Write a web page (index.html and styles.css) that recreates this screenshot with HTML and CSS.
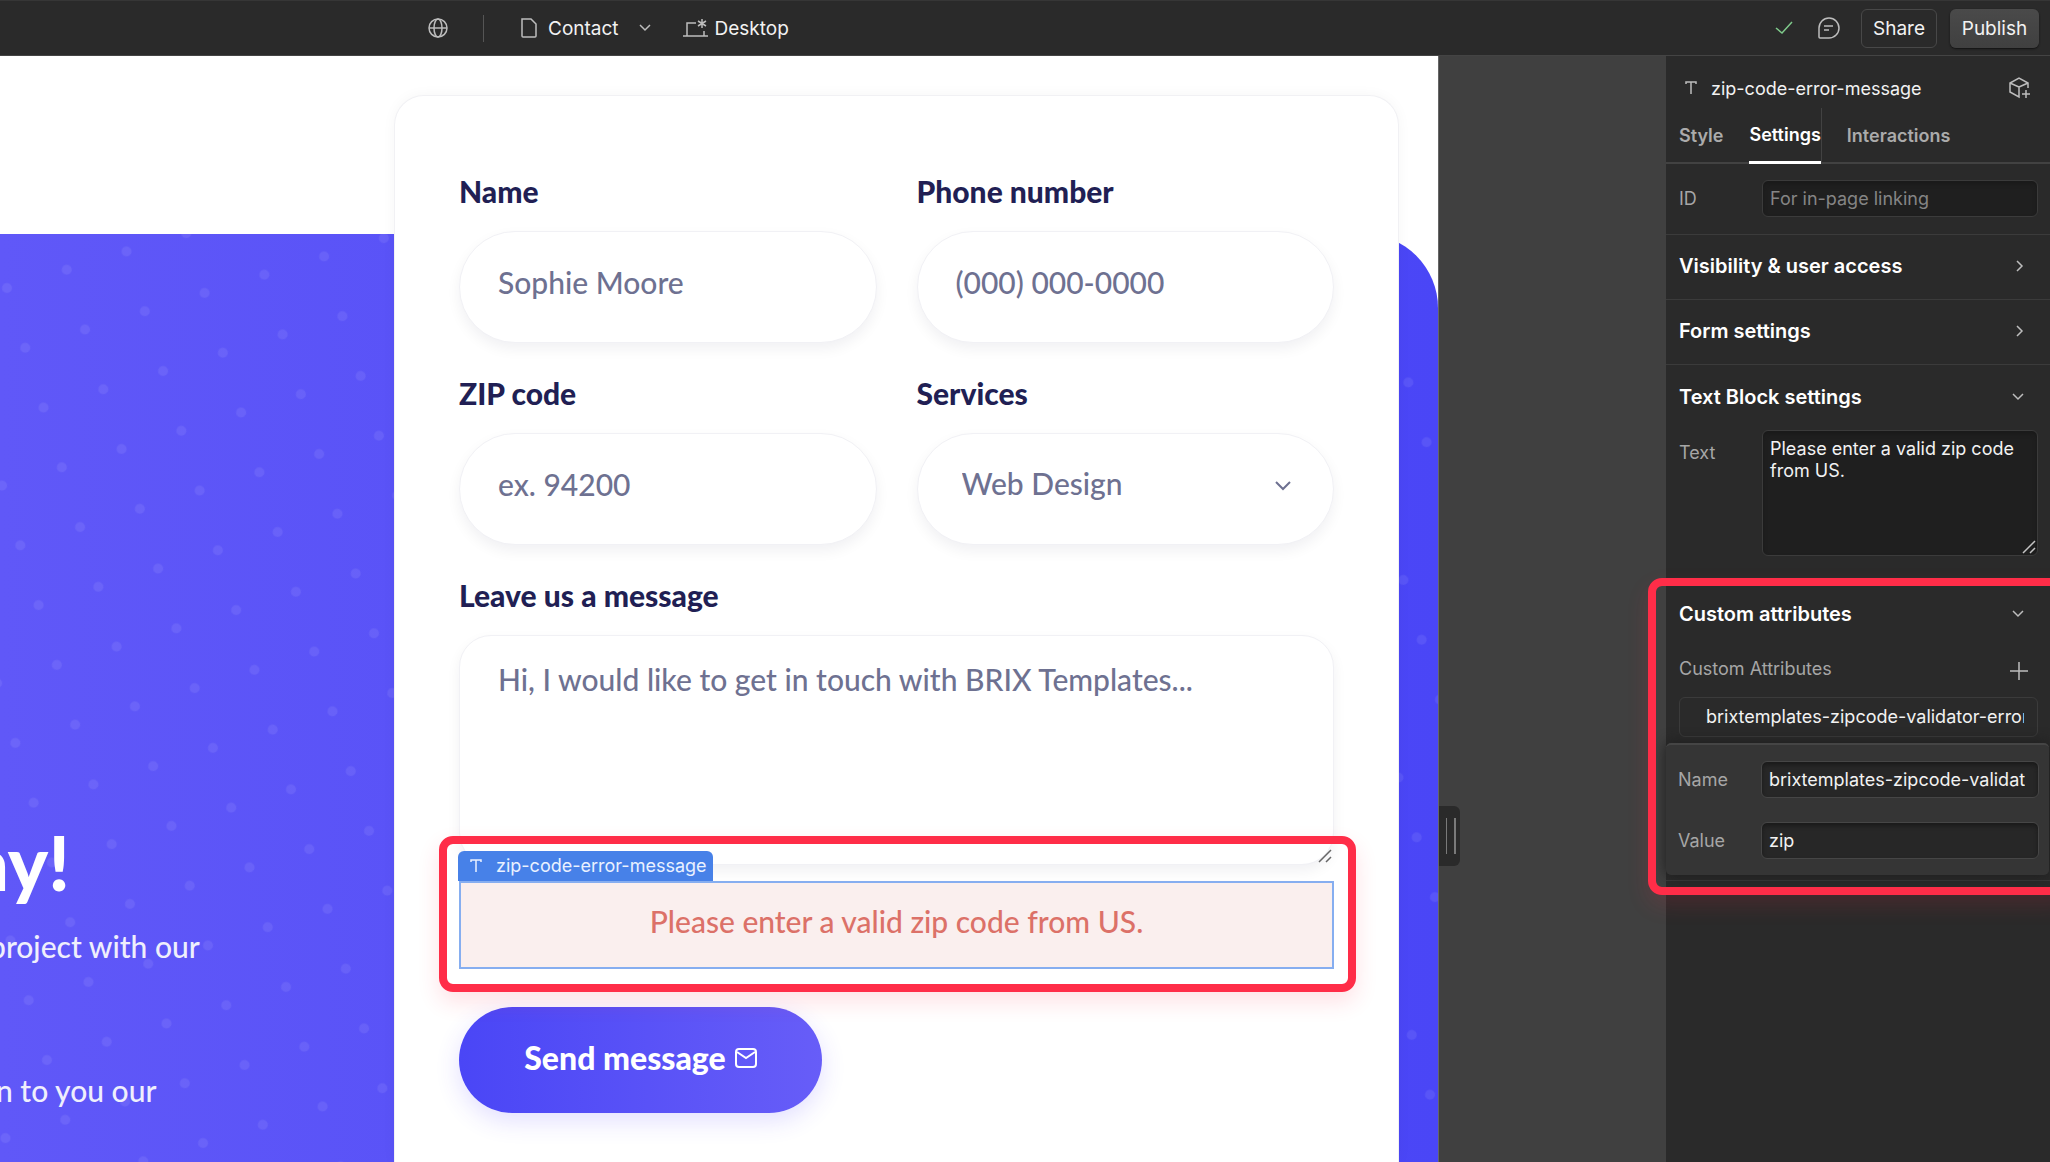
FILE: index.html
```html
<!DOCTYPE html>
<html lang="en">
<head>
  <meta charset="UTF-8">
  <meta name="viewport" content="width=device-width, initial-scale=1.0">
  <title>Contact - Designer</title>
  <link rel="stylesheet" href="styles.css">
</head>
<body>
  <header class="topbar">
    <div class="topbar-left">
      <button class="icon-btn globe-btn" aria-label="Localization">
        <svg width="20" height="20" viewBox="0 0 20 20"><circle cx="10" cy="10" r="9"/><ellipse cx="10" cy="10" rx="4" ry="9"/><path d="M1 10h18"/></svg>
      </button>
      <span class="divider"></span>
      <button class="page-btn">
        <svg width="18" height="20" viewBox="0 0 18 20"><path d="M2 1h9l5 5v12a1 1 0 0 1-1 1H3a1 1 0 0 1-1-1V1z"/></svg>
        <span>Contact</span>
        <svg class="page-arrow" width="12" height="8" viewBox="0 0 12 8"><path d="M1 1l5 5 5-5"/></svg>
      </button>
      <button class="page-btn device-btn">
        <svg width="26" height="20" viewBox="0 0 26 20"><path d="M0 18h25M4 18V5h9M21 18v-5M19 1v9M15 3l8 5M23 3l-8 5"/></svg>
        <span>Desktop</span>
      </button>
    </div>
    <div class="topbar-right">
      <svg class="check" width="18" height="14" viewBox="0 0 18 14"><path d="M1 7l6 5L17 1"/></svg>
      <button class="icon-btn" aria-label="Comments">
        <svg width="22" height="22" viewBox="0 0 22 22"><path d="M1 20V11a10 10 0 1 1 10 10H2a1 1 0 0 1-1-1zM6 9h9M6 13h5"/></svg>
      </button>
      <button class="share-btn">Share</button>
      <button class="publish-btn">Publish</button>
    </div>
  </header>

  <div class="workspace">
    <main class="page">
      <div class="hero-bg">
        <svg width="100%" height="100%" aria-hidden="true">
          <defs>
            <pattern id="dots" width="62.5" height="62.5" patternUnits="userSpaceOnUse" patternTransform="translate(7 54) rotate(-17) translate(-31 -31)">
              <circle cx="31" cy="31" r="5" fill="#fff" fill-opacity="0.08"/>
            </pattern>
          </defs>
          <rect width="100%" height="100%" fill="url(#dots)"/>
        </svg>
      </div>
      <div class="hero-text">
        <h1>ay!</h1>
        <p class="lead">project with our</p>
        <p class="note">n to you our</p>
      </div>
      <form class="card">
        <div class="fields">
          <div class="field">
            <label for="name">Name</label>
            <input id="name" type="text" placeholder="Sophie Moore">
          </div>
          <div class="field">
            <label for="phone">Phone number</label>
            <input id="phone" type="tel" placeholder="(000) 000-0000">
          </div>
          <div class="field">
            <label for="zip">ZIP code</label>
            <input id="zip" type="text" placeholder="ex. 94200">
          </div>
          <div class="field">
            <label for="services">Services</label>
            <div class="select-wrap">
              <select id="services"><option>Web Design</option></select>
              <svg width="16" height="10" viewBox="0 0 16 10"><path d="M1 1l7 7 7-7"/></svg>
            </div>
          </div>
          <div class="field wide">
            <label for="message">Leave us a message</label>
            <div class="area-wrap">
              <textarea id="message" placeholder="Hi, I would like to get in touch with BRIX Templates..."></textarea>
              <svg class="grip" width="14" height="14" viewBox="0 0 14 14"><path d="M1 13L13 1M8 13l5-5"/></svg>
            </div>
          </div>
        </div>
        <div class="error-wrap">
          <div class="error-message">Please enter a valid zip code from US.</div>
          <span class="tag">
            <svg width="12" height="14" viewBox="0 0 12 14"><path d="M1 3V1h10v2M6 1v12"/></svg>
            zip-code-error-message
          </span>
          <div class="highlight"></div>
        </div>
        <button type="button" class="send-btn">
          Send message
          <svg width="22" height="20" viewBox="0 0 22 20"><rect x="1" y="1" width="20" height="18" rx="3"/><path d="M2 4l9 6 9-6"/></svg>
        </button>
      </form>
    </main>

    <div class="gutter">
      <div class="handle"></div>
    </div>

    <aside class="panel">
      <div class="panel-title">
        <svg width="12" height="14" viewBox="0 0 12 14"><path d="M1 3V1h10v2M6 1v12"/></svg>
        <span>zip-code-error-message</span>
        <button class="icon-btn" aria-label="Create component">
          <svg width="22" height="22" viewBox="0 0 22 22"><path d="M19 11V6l-9-5-9 5v9l9 5V10L1 6M10 10l9-4M17 13v8M13 17h8"/></svg>
        </button>
      </div>
      <nav class="tabs">
        <button>Style</button>
        <button class="active">Settings</button>
        <button>Interactions</button>
      </nav>
      <div class="row id-row">
        <label for="el-id">ID</label>
        <input id="el-id" type="text" placeholder="For in-page linking">
      </div>
      <button class="section-head">
        Visibility &amp; user access
        <svg width="8" height="12" viewBox="0 0 8 12"><path d="M1 1l5 5-5 5"/></svg>
      </button>
      <button class="section-head">
        Form settings
        <svg width="8" height="12" viewBox="0 0 8 12"><path d="M1 1l5 5-5 5"/></svg>
      </button>
      <section class="text-block">
        <button class="section-head">
          Text Block settings
          <svg width="12" height="8" viewBox="0 0 12 8"><path d="M1 1l5 5 5-5"/></svg>
        </button>
        <div class="row text-row">
          <label for="el-text">Text</label>
          <div class="area-wrap">
            <textarea id="el-text">Please enter a valid zip code from US.</textarea>
            <svg class="grip" width="14" height="14" viewBox="0 0 14 14"><path d="M1 13L13 1M8 13l5-5"/></svg>
          </div>
        </div>
      </section>
      <section class="attributes">
        <button class="section-head">
          Custom attributes
          <svg width="12" height="8" viewBox="0 0 12 8"><path d="M1 1l5 5 5-5"/></svg>
        </button>
        <div class="attr-label">
          <span>Custom Attributes</span>
          <button class="icon-btn" aria-label="Add attribute">
            <svg width="18" height="18" viewBox="0 0 18 18"><path d="M9 0v18M0 9h18"/></svg>
          </button>
        </div>
        <button class="attr-item"><span>brixtemplates-zipcode-validator-error="zip"</span></button>
        <div class="popover">
          <div class="row">
            <label for="attr-name">Name</label>
            <input id="attr-name" type="text" value="brixtemplates-zipcode-validator-error">
          </div>
          <div class="row">
            <label for="attr-value">Value</label>
            <input id="attr-value" type="text" value="zip">
          </div>
        </div>
        <div class="highlight"></div>
      </section>
    </aside>
  </div>
</body>
</html>
```
FILE: styles.css
```css
* { box-sizing: border-box; margin: 0; padding: 0; }
body {
  display: flex;
  flex-direction: column;
  height: 100vh;
  overflow: hidden;
  background-color: #2a2a2a;
  color: #f2f2f2;
  font-family: Inter, "Liberation Sans", sans-serif;
  font-size: 18px;
}
button, input, select, textarea { font: inherit; color: inherit; background: none; border: none; outline: none; }
button { cursor: pointer; }
svg { fill: none; stroke: #bdbdbd; stroke-width: 2; flex-shrink: 0; display: block; }

/* Top bar */
.topbar {
  display: flex;
  justify-content: space-between;
  align-items: center;
  height: 56px;
  flex-shrink: 0;
  padding: 0 11px 0 428px;
  border-top: 1px solid #363636;
  border-bottom: 1px solid #444;
}
.topbar svg { stroke-width: 1.5; }
.topbar-left, .topbar-right, .page-btn { display: flex; align-items: center; }
.divider { width: 1px; height: 27px; margin: 0 36px 0 35px; background-color: #555; }
.page-btn { gap: 10px; font-size: 19px; }
.page-arrow { margin-left: 10px; }
.device-btn { margin-left: 32px; gap: 6px; }
.topbar-right { gap: 13px; }
.topbar-right .icon-btn { margin: 0 8px 0 12px; }
.topbar .check { stroke: #7fca8b; }
.share-btn, .publish-btn { height: 39px; border-radius: 6px; font-size: 19px; }
.share-btn { width: 76px; border: 1px solid #484848; }
.publish-btn { width: 89px; background: linear-gradient(#4a4a4a, #404040); box-shadow: 0 1px 2px #111; }

/* Workspace */
.workspace { display: grid; grid-template-columns: 1fr 228px 384px; flex: 1; min-height: 0; }
.page {
  display: grid;
  grid-template-columns: 394px 1fr 39px;
  grid-template-rows: 100%;
  background-color: #fff;
  color: #6e7191;
  font-family: Lato, "Open Sans", sans-serif;
  font-size: 30px;
  font-weight: 500;
  line-height: 36px;
  overflow: hidden;
}
.hero-bg {
  grid-area: 1 / 1 / 2 / 4;
  margin-top: 178px;
  border-top-right-radius: 74px;
  overflow: hidden;
  background: linear-gradient(90deg, #6058f8, #4a46f6);
}
.hero-bg svg { stroke: none; }
.hero-text { grid-area: 1 / 1 / 2 / 2; z-index: 1; padding-top: 764px; color: #efeffc; white-space: nowrap; overflow: hidden; }
.hero-text h1 { font-size: 76px; font-weight: 900; line-height: 84px; color: #fff; text-indent: -30px; }
.hero-text .lead { margin-top: 24px; text-indent: -11px; }
.hero-text .note { margin-top: 108px; text-indent: -4px; }

/* Form card */
.card {
  grid-area: 1 / 2 / 2 / 3;
  z-index: 1;
  margin-top: 39px;
  padding: 77px 64px 0;
  border: 1px solid #f1f1f4;
  border-bottom: none;
  border-radius: 30px 30px 0 0;
  background-color: #fff;
  box-shadow: 0 0 14px rgba(20, 20, 43, 0.04);
}
.fields { display: grid; grid-template-columns: 1fr 1fr; column-gap: 40px; row-gap: 32px; }
.field { display: flex; flex-direction: column; gap: 22px; }
.field.wide { grid-column: 1 / 3; }
.field label { color: #211f54; font-weight: 900; font-size: 30px; }
.field input, .field select, .field textarea {
  width: 100%;
  height: 112px;
  padding: 0 38px 10px;
  border: 1px solid #f1f1f5;
  border-radius: 56px;
  background-color: #fff;
  box-shadow: 0 6px 14px rgba(20, 20, 43, 0.06);
}
.field ::placeholder { color: #6e7191; opacity: 1; }
.select-wrap, .area-wrap { position: relative; }
.field select { padding: 0 44px 12px; appearance: none; }
.select-wrap svg { position: absolute; right: 43px; top: 48px; stroke: #6e7191; }
.area-wrap textarea { display: block; resize: none; }
.field textarea { height: 230px; padding: 25px 38px; border-radius: 32px; }
.grip { position: absolute; right: 2px; bottom: 2px; stroke: #666; stroke-width: 1.5; }

.error-wrap { position: relative; margin-top: 16px; }
.error-message {
  height: 88px;
  border: 2px solid #86aef0;
  background-color: #faefee;
  color: #dc7168;
  line-height: 76px;
  text-align: center;
}
.tag {
  position: absolute;
  left: -1px;
  top: -30px;
  display: flex;
  align-items: center;
  gap: 14px;
  height: 30px;
  padding: 0 6px 0 12px;
  border-radius: 6px 6px 0 0;
  background-color: #4781e8;
  color: #eaf1ff;
  font-family: Inter, sans-serif;
  font-size: 18px;
  font-weight: 400;
}
.tag svg { stroke: #eaf1ff; stroke-width: 1.5; }
.highlight {
  position: absolute;
  inset: -45px -22px -23px -20px;
  border: 8px solid #ff2d48;
  border-radius: 14px;
  box-shadow: 0 10px 22px rgba(255, 45, 72, 0.14);
  pointer-events: none;
}
.send-btn {
  display: flex;
  align-items: center;
  justify-content: center;
  gap: 9px;
  width: 363px;
  height: 106px;
  margin-top: 38px;
  padding-bottom: 4px;
  border-radius: 53px;
  background: linear-gradient(90deg, #4a46f6, #675df8);
  box-shadow: 0 8px 24px rgba(74, 58, 255, 0.16);
  color: #fff;
  font-size: 32px;
  font-weight: 900;
}
.send-btn svg { stroke: #fff; }

/* Gutter between canvas and panel */
.gutter { padding-top: 750px; background-color: #404040; border-left: 1px solid #666; }
.handle { width: 21px; height: 60px; padding: 12px 7px; border-radius: 0 6px 6px 0; background-color: #2a2a2a; }
.handle::before { content: ""; display: block; width: 7px; height: 36px; border: solid #7a7a7a; border-width: 0 2px 0 1px; }

/* Right panel */
.panel { background-color: #2a2a2a; min-width: 0; }
.panel svg { stroke-width: 1.5; }
.panel-title { display: flex; align-items: center; height: 52px; padding: 12px 19px 0; gap: 14px; }
.panel-title .icon-btn { margin-left: auto; }
.tabs { display: flex; gap: 26px; height: 56px; padding: 0 13px; border-bottom: 2px solid #424242; }
.tabs button { height: 56px; padding-bottom: 2px; color: #ababab; font-weight: 600; }
.tabs .active { padding-bottom: 0; color: #fff; border-bottom: 3px solid #fff; box-shadow: 1px 0 #424242; }
.row { display: flex; align-items: center; padding: 0 12px 0 13px; }
.row label { width: 83px; flex-shrink: 0; color: #a6a6a6; }
.row .area-wrap { flex: 1; }
.row input, .row textarea {
  flex: 1;
  width: 100%;
  min-width: 0;
  height: 37px;
  padding: 0 7px;
  border: 1px solid #3b3b3b;
  border-radius: 6px;
  background-color: #1f1f1f;
  box-shadow: inset 0 3px 4px #1a1a1a;
}
.row input::placeholder { color: #858585; opacity: 1; }
.id-row { height: 71px; padding-bottom: 1px; border-bottom: 1px solid #3b3b3b; }
.section-head {
  display: flex;
  justify-content: space-between;
  align-items: center;
  width: 100%;
  height: 65px;
  padding: 0 26px 2px 13px;
  border-bottom: 1px solid #3b3b3b;
  color: #fff;
  font-size: 20px;
  font-weight: 600;
}
.text-block { height: 217px; border-bottom: 1px solid #3b3b3b; }
.text-block .section-head, .attributes .section-head { border: none; }
.text-row { align-items: flex-start; }
.text-row label { padding-top: 12px; }
.row textarea { height: 126px; padding: 7px; line-height: 22px; }
.row .grip { stroke: #c4c4c4; }
.attributes { position: relative; padding-bottom: 5px; border-bottom: 1px solid #3b3b3b; }
.attributes .highlight { inset: -4px -22px -15px -18px; }
.attr-label { display: flex; justify-content: space-between; align-items: flex-start; height: 50px; padding: 11px 22px 0 13px; color: #a6a6a6; }
.attr-label .icon-btn { padding-top: 4px; }
.attr-item { display: block; width: 359px; height: 40px; margin-left: 13px; padding: 0 13px 2px 26px; border: 1px solid #3b3b3b; border-radius: 6px; text-align: left; }
.attr-item span { display: block; overflow: hidden; white-space: nowrap; }
.popover {
  display: flex;
  flex-direction: column;
  gap: 24px;
  margin: 6px 1px 0 0;
  padding: 16px 0;
  border-top: 2px solid #454545;
  border-radius: 5px;
  background-color: #353535;
  box-shadow: 0 0 14px #1d1d1d;
}
.popover .row { padding: 0 10px 0 12px; }
.popover .row input { padding-right: 13px; background-color: #272727; border-color: #464646; }
```
